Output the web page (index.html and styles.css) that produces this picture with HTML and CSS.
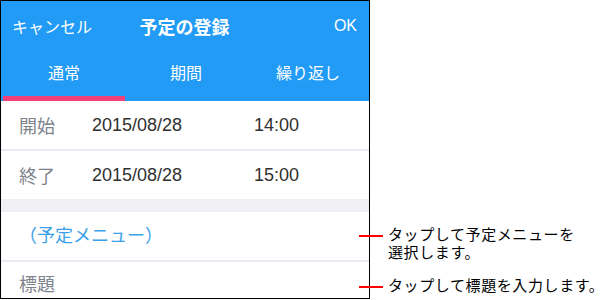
FILE: index.html
```html
<!DOCTYPE html>
<html>
<head>
    <title>予定の登録</title>
    <link rel="stylesheet" href="styles.css">
</head>
<body>
    <div class="page">
        <div class="phone">
            <!-- ヘッダー -->
            <div class="topbar">
                <span class="cancel">キャンセル</span>
                <span class="title">予定の登録</span>
                <span class="ok">OK</span>
            </div>
            <div class="tabs">
                <div class="tab active">通常</div>
                <div class="tab">期間</div>
                <div class="tab">繰り返し</div>
            </div>

            <!-- 日時 -->
            <div class="row line">
                <span class="label">開始</span>
                <span class="date">2015/08/28</span>
                <span class="time">14:00</span>
            </div>
            <div class="row">
                <span class="label">終了</span>
                <span class="date">2015/08/28</span>
                <span class="time">15:00</span>
            </div>
            <div class="gap"></div>

            <div class="row line">
                <span class="menu">（予定メニュー）</span>
            </div>
            <div class="row last">
                <span class="label">標題</span>
            </div>
        </div>

        <!-- 説明 -->
        <div class="notes">
            <div class="note first">
                <div class="mark"></div>
                <div class="text">タップして予定メニューを<br>選択します。</div>
            </div>
            <div class="note">
                <div class="mark"></div>
                <div class="text">タップして標題を入力します。</div>
            </div>
        </div>
    </div>
</body>
</html>
```

FILE: styles.css
```css
body {
    margin: 0;
    background: #fff;
    font-family: "Liberation Sans", "Noto Sans CJK JP", sans-serif;
}

.page {
    display: flex;
    width: 610px;
    height: 300px;
}

.phone {
    width: 368px;
    height: 297px;
    border: 1px solid #000;
    overflow: hidden;
    flex-shrink: 0;
    background: #fff;
}

.topbar {
    height: 49px;
    background: #219bf6;
    color: #fff;
    display: flex;
    align-items: center;
    justify-content: space-between;
    padding: 0 12px 0 11px;
}

.cancel {
    font-size: 16px;
    width: 80px;
}

.title {
    font-size: 18px;
    font-weight: bold;
}

.ok {
    font-size: 16px;
    width: 80px;
    text-align: right;
}

.tabs {
    height: 51px;
    background: #219bf6;
    display: flex;
    padding-left: 2px;
}

.tab {
    flex: 1;
    color: #fff;
    font-size: 16px;
    display: flex;
    align-items: center;
    justify-content: center;
    padding-bottom: 2px;
    border-bottom: 5px solid transparent;
}

.tab.active {
    border-bottom-color: #f23f78;
}

.row {
    height: 48px;
    display: flex;
    align-items: center;
    padding-left: 18px;
    font-size: 18px;
}

.row.line {
    height: 48px;
    border-bottom: 2px solid #e8ecf2;
}

.row.last {
    height: 42px;
}

.label {
    color: #7d828b;
    width: 73px;
}

.date {
    color: #303030;
    width: 162px;
}

.time {
    color: #303030;
}

.gap {
    height: 13px;
    background: #efeff4;
}

.menu {
    color: #3b9fe9;
    font-size: 18px;
    margin-top: -4px;
}

.notes {
    margin-left: -11px;
    padding-top: 225px;
}

.note {
    display: flex;
    align-items: flex-start;
    margin-bottom: 15px;
}

.mark {
    width: 24px;
    height: 2px;
    background: #f00;
    margin-top: 10px;
    margin-right: 5px;
}

.text {
    font-family: "Noto Sans CJK JP", sans-serif;
    font-size: 15px;
    line-height: 18px;
    letter-spacing: 0.6px;
    color: #000;
}
```
